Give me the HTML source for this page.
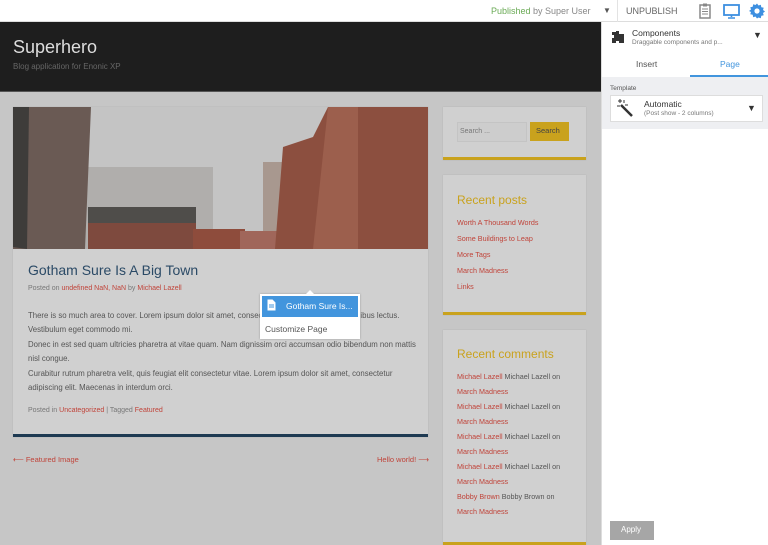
<!DOCTYPE html>
<html><head><meta charset="utf-8"><style>
*{margin:0;padding:0;box-sizing:border-box}
body{width:768px;height:545px;overflow:hidden;font-family:"Liberation Sans",sans-serif;background:#c6c6c6;position:relative;font-size:8px}
.abs{position:absolute}
.top{left:0;top:0;width:768px;height:22px;background:#fff;border-bottom:1px solid #ddd}
a,.r{color:#c0443a}
.card{background:#d0d0d0;box-shadow:0 0 1px #aaa}
</style></head><body>
<div class="abs top">
 <div class="abs" style="left:491px;top:6px;font-size:9px;color:#888"><span style="color:#6aaa55">Published</span> by Super User</div>
 <div class="abs" style="left:603px;top:6px;font-size:8px;color:#555">▼</div>
 <div class="abs" style="left:617px;top:0;width:1px;height:22px;background:#e3e3e3"></div>
 <div class="abs" style="left:626px;top:6px;font-size:9px;color:#666">UNPUBLISH</div>
 <svg class="abs" style="left:698px;top:3px" width="14" height="16"><rect x="2" y="2" width="10" height="13" fill="none" stroke="#888" stroke-width="1.5"/><rect x="5" y="0.5" width="4" height="3" fill="#888"/><path d="M4 6h6M4 8.5h6M4 11h6" stroke="#888"/></svg>
 <svg class="abs" style="left:723px;top:4px" width="17" height="15"><rect x="1" y="1" width="15" height="10" fill="none" stroke="#3d8fe0" stroke-width="1.8"/><path d="M8.5 11v2M5 14h7" stroke="#3d8fe0" stroke-width="1.6"/></svg>
 <svg class="abs" style="left:749px;top:3px" width="16" height="16" viewBox="0 0 16 16"><path d="M8 0.5l1.5 2 2.3-.7.5 2.4 2.4.5-.7 2.3 2 1.5-2 1.5.7 2.3-2.4.5-.5 2.4-2.3-.7L8 15.5l-1.5-2-2.3.7-.5-2.4-2.4-.5.7-2.3L0 8l2-1.5-.7-2.3 2.4-.5.5-2.4 2.3.7z" fill="#3d8fe0"/><circle cx="8" cy="8" r="2.6" fill="#fff"/></svg>
</div>
<div class="abs" style="left:0;top:22px;width:601px;height:70px;background:#1e1e1e;border-bottom:1px solid #555"></div>
<div class="abs" style="left:13px;top:37px;font-size:18px;color:#ddd">Superhero</div>
<div class="abs" style="left:13px;top:62px;font-size:8px;color:#666">Blog application for Enonic XP</div>
<div class="abs card" style="left:13px;top:107px;width:415px;height:330px;border-bottom:3px solid #1e3a52"></div>
<svg class="abs" style="left:13px;top:107px" width="415" height="142">
 <rect width="415" height="142" fill="#c4c4c4"/>
 <rect x="60" y="60" width="140" height="82" fill="#b0aeac"/>
 <rect x="250" y="55" width="60" height="87" fill="#a8988f"/>
 <polygon points="0,0 78,0 72,142 0,142" fill="#6a5a54"/>
 <polygon points="0,0 16,0 14,142 0,140" fill="#3e3c3a"/>
 <rect x="75" y="115" width="108" height="27" fill="#7e4a3e"/>
 <rect x="75" y="100" width="108" height="16" fill="#4f4d4a"/>
 <rect x="180" y="122" width="52" height="20" fill="#8e4c3c"/>
 <rect x="227" y="124" width="48" height="18" fill="#a0665a"/>
 <polygon points="270,40 300,30 315,0 415,0 415,142 262,142" fill="#8c4f3f"/>
 <polygon points="315,0 345,0 345,142 300,142" fill="#9c5f4d"/>
</svg>
<div class="abs" style="left:28px;top:262px;font-size:14px;color:#2b4a66">Gotham Sure Is A Big Town</div>
<div class="abs" style="left:28px;top:285px;font-size:7px;color:#777">Posted on <span class="r">undefined NaN, NaN</span> by <span class="r">Michael Lazell</span></div>
<div class="abs" style="left:28px;top:309px;width:396px;font-size:7.8px;line-height:14.4px;color:#555">There is so much area to cover. Lorem ipsum dolor sit amet, consectetur adipiscing elit. Sed dapibus lectus. Vestibulum eget commodo mi.<br>Donec in est sed quam ultricies pharetra at vitae quam. Nam dignissim orci accumsan odio bibendum non mattis nisl congue.<br>Curabitur rutrum pharetra velit, quis feugiat elit consectetur vitae. Lorem ipsum dolor sit amet, consectetur adipiscing elit. Maecenas in interdum orci.</div>
<div class="abs" style="left:28px;top:407px;font-size:7px;color:#777">Posted in <span class="r">Uncategorized</span> | Tagged <span class="r">Featured</span></div>
<div class="abs r" style="left:13px;top:455px;font-size:7.5px">⟵ Featured Image</div>
<div class="abs r" style="left:377px;top:455px;font-size:7.5px">Hello world! ⟶</div>
<div class="abs" style="left:260px;top:294px;width:100px;height:45px;background:#fff;box-shadow:0 0 2px #999"></div>
<div class="abs" style="left:306px;top:290px;width:0;height:0;border:4px solid transparent;border-bottom-color:#fff;border-top:0"></div>
<div class="abs" style="left:262px;top:296px;width:96px;height:21px;background:#4295dd;color:#fff;font-size:8.5px;padding:5px 0 0 24px">Gotham Sure Is...</div>
<svg class="abs" style="left:267px;top:299px" width="9" height="12"><path d="M0.5 0.5h5l3 3v8h-8z" fill="#fff"/><path d="M2 6h5M2 8h5" stroke="#4295dd"/></svg>
<div class="abs" style="left:265px;top:324px;font-size:8.5px;color:#555">Customize Page</div>
<div class="abs card" style="left:443px;top:107px;width:143px;height:53px;border-bottom:3px solid #c9a21d"></div>
<div class="abs" style="left:457px;top:122px;width:70px;height:20px;border:1px solid #c4c4c4;background:#cdcdcd;font-size:7px;color:#777;padding:5px 2px">Search ...</div>
<div class="abs" style="left:530px;top:122px;width:39px;height:19px;background:#c9a21d;font-size:7.5px;color:#444;padding:4px 0 0 6px">Search</div>
<div class="abs card" style="left:443px;top:175px;width:143px;height:140px;border-bottom:3px solid #c9a21d"></div>
<div class="abs" style="left:457px;top:193px;font-size:12px;color:#c9a21d">Recent posts</div>
<div class="abs r" style="left:457px;top:215px;font-size:7.2px;line-height:16px">Worth A Thousand Words<br>Some Buildings to Leap<br>More Tags<br>March Madness<br>Links</div>
<div class="abs card" style="left:443px;top:330px;width:143px;height:215px;border-bottom:3px solid #c9a21d"></div>
<div class="abs" style="left:457px;top:347px;font-size:12px;color:#c9a21d">Recent comments</div>
<div class="abs" style="left:457px;top:369px;font-size:7.2px;line-height:15px;color:#555"><span class="r">Michael Lazell</span> Michael Lazell on<br><span class="r">March Madness</span><br><span class="r">Michael Lazell</span> Michael Lazell on<br><span class="r">March Madness</span><br><span class="r">Michael Lazell</span> Michael Lazell on<br><span class="r">March Madness</span><br><span class="r">Michael Lazell</span> Michael Lazell on<br><span class="r">March Madness</span><br><span class="r">Bobby Brown</span> Bobby Brown on<br><span class="r">March Madness</span></div>
<div class="abs" style="left:601px;top:22px;width:167px;height:523px;background:#fff;border-left:1px solid #ddd"></div>
<svg class="abs" style="left:611px;top:30px" width="14" height="14"><path d="M5 1h3v3h5v9H8v-2H5v2H1V8h2V5H1V2h4z" fill="#333"/></svg>
<div class="abs" style="left:632px;top:28px;font-size:8.5px;color:#333">Components</div>
<div class="abs" style="left:632px;top:39px;font-size:6.5px;color:#777">Draggable components and p...</div>
<div class="abs" style="left:753px;top:30px;font-size:9px;color:#333">▼</div>
<div class="abs" style="left:636px;top:59px;font-size:8.5px;color:#555">Insert</div>
<div class="abs" style="left:720px;top:59px;font-size:8.5px;color:#4295dd">Page</div>
<div class="abs" style="left:690px;top:75px;width:78px;height:2px;background:#4295dd"></div>
<div class="abs" style="left:602px;top:77px;width:166px;height:52px;background:#eeeff2"></div>
<div class="abs" style="left:610px;top:85px;font-size:6.5px;color:#555">Template</div>
<div class="abs" style="left:610px;top:95px;width:153px;height:27px;background:#fff;border:1px solid #ddd"></div>
<svg class="abs" style="left:616px;top:98px" width="18" height="20"><path d="M5 7l11 11" stroke="#333" stroke-width="2.5"/><path d="M4 1v4M2 3h4M1 8h3M8 2v3M9 7h3" stroke="#333"/></svg>
<div class="abs" style="left:644px;top:99px;font-size:8.5px;color:#333">Automatic</div>
<div class="abs" style="left:644px;top:110px;font-size:6.5px;color:#777">(Post show - 2 columns)</div>
<div class="abs" style="left:747px;top:103px;font-size:9px;color:#333">▼</div>
<div class="abs" style="left:610px;top:521px;width:44px;height:19px;background:#a6a6a6;color:#fff;font-size:8px;padding:4px 0 0 11px">Apply</div>
</body></html>
